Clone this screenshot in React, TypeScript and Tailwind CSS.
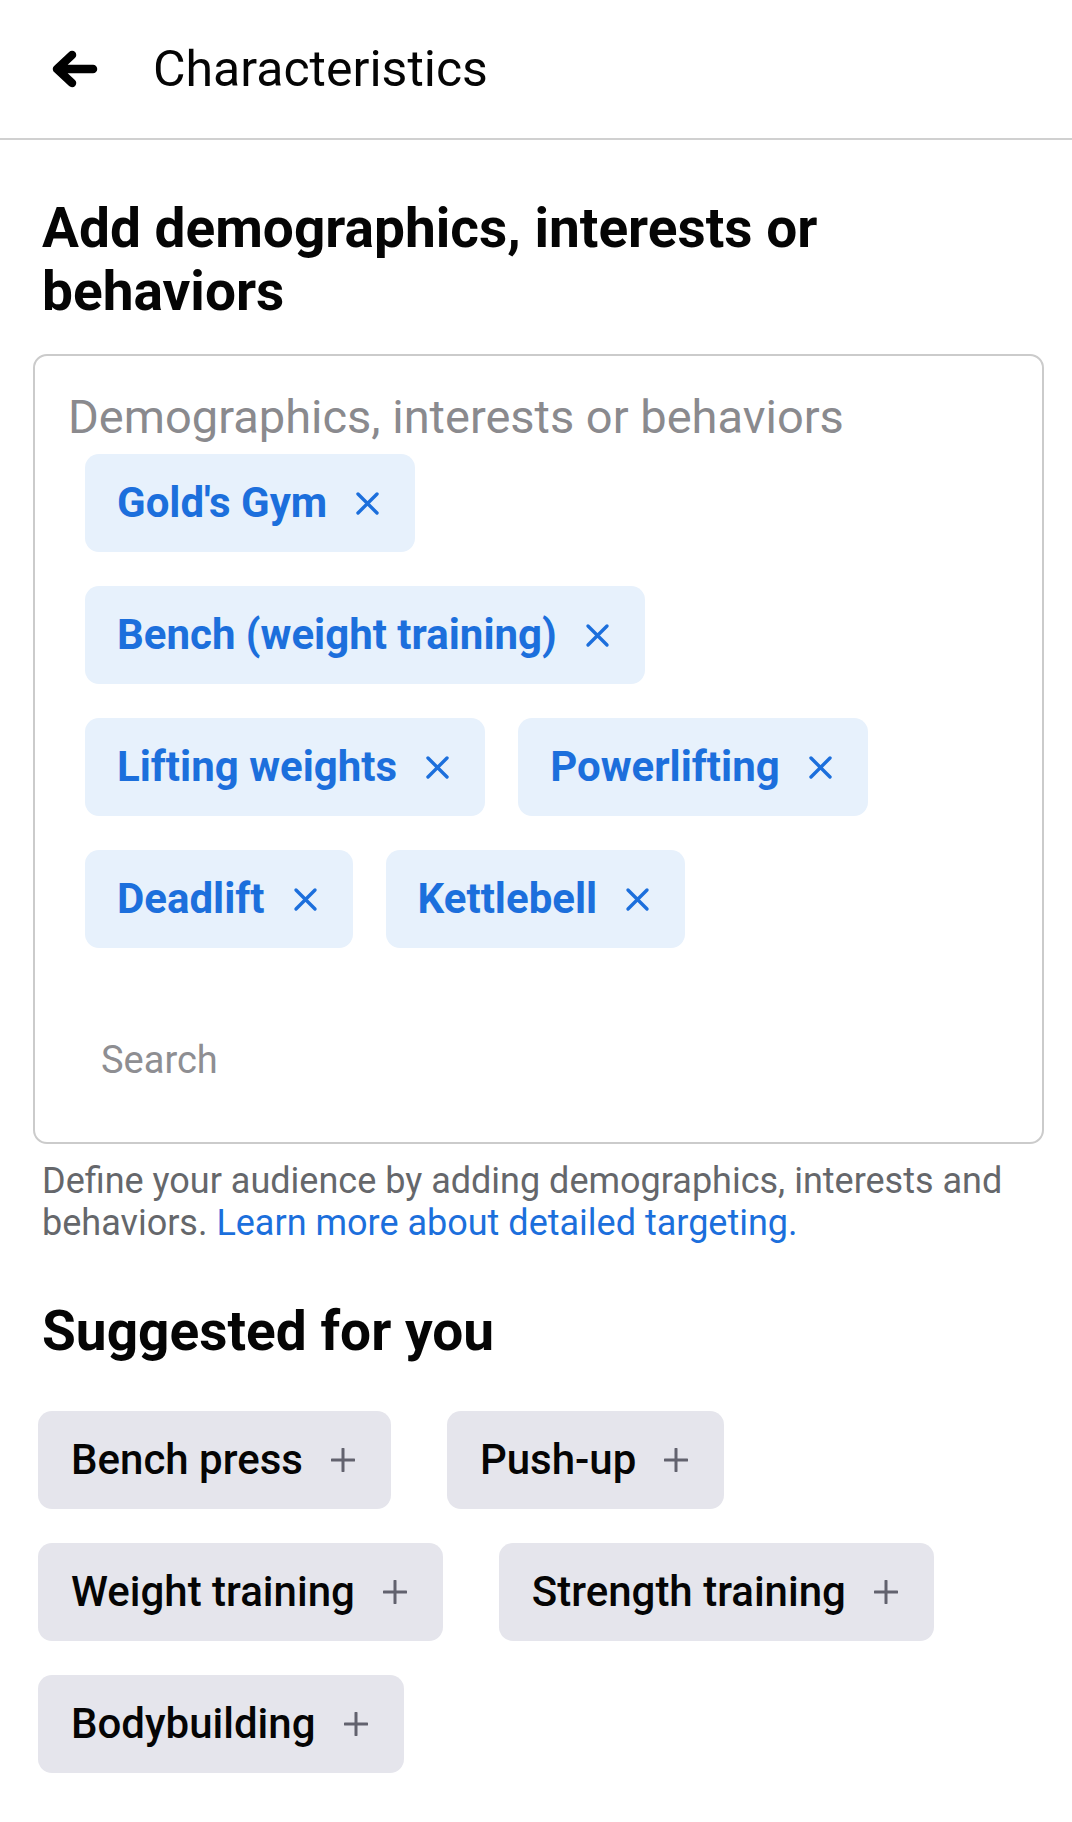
import React from "react";

const font = { fontFamily: "Roboto, 'Noto Sans', Arial, sans-serif" };

function XIcon() {
  return (
    <svg width="25" height="25" viewBox="0 0 25 25" className="shrink-0">
      <path d="M3 3 L22 22 M22 3 L3 22" stroke="#1c6fdc" strokeWidth="3.4" strokeLinecap="round" fill="none" />
    </svg>
  );
}

function PlusIcon() {
  return (
    <svg width="24" height="24" viewBox="0 0 24 24" className="shrink-0">
      <path d="M12 1 V23 M1 12 H23" stroke="#62626e" strokeWidth="3" strokeLinecap="round" fill="none" />
    </svg>
  );
}

function BlueChip({ label }: { label: string }) {
  return (
    <div className="flex h-[98px] items-center rounded-[14px] bg-[#e7f1fc] pl-[32px] pr-[35px]">
      <span className="text-[42px] font-bold leading-none text-[#1c6fdc]">{label}</span>
      <span className="ml-[28px] flex items-center">
        <XIcon />
      </span>
    </div>
  );
}

function GrayChip({ label }: { label: string }) {
  return (
    <div className="flex h-[98px] items-center rounded-[14px] bg-[#e5e5ec] pl-[33px] pr-[36px]">
      <span className="text-[42px] font-medium leading-none text-[#050505]">{label}</span>
      <span className="ml-[28px] flex items-center">
        <PlusIcon />
      </span>
    </div>
  );
}

export default function App() {
  const blueRows = [["Gold's Gym"], ["Bench (weight training)"], ["Lifting weights", "Powerlifting"], ["Deadlift", "Kettlebell"]];
  const grayRows = [["Bench press", "Push-up"], ["Weight training", "Strength training"], ["Bodybuilding"]];
  return (
    <div style={font} className="min-h-[1822px] w-[1072px] bg-white">
      <div className="flex h-[140px] items-center border-b-2 border-[#d0d0d0]">
        <div className="ml-[50px] flex w-[50px] items-center">
          <svg width="48" height="40" viewBox="0 0 48 40">
            <path d="M43 20 H8 M22 6 L7 20 L22 34" stroke="#000" strokeWidth="8.5" strokeLinecap="round" strokeLinejoin="round" fill="none" />
          </svg>
        </div>
        <div className="ml-[53px] text-[50px] leading-none text-[#050505]">Characteristics</div>
      </div>

      <h1 className="mt-[57px] pl-[42px] pr-[40px] text-[55px] font-bold leading-[63px] text-[#050505]">
        Add demographics, interests or behaviors
      </h1>

      <div className="ml-[33px] mr-[28px] mt-[31px] flex h-[790px] flex-col rounded-[14px] border-2 border-[#cbcbcb] pt-[33px]">
        <div className="pl-[33px] text-[47px] leading-[56px] text-[#8a8a8e]">Demographics, interests or behaviors</div>
        <div className="mt-[9px] flex flex-col gap-y-[34px] pl-[50px]">
          {blueRows.map((row, i) => (
            <div key={i} className="flex gap-x-[33px]">
              {row.map((l) => (
                <BlueChip key={l} label={l} />
              ))}
            </div>
          ))}
        </div>
        <div className="mt-[89px] pl-[66px] text-[38px] leading-[46px] text-[#8e8e92]">Search</div>
      </div>

      <p className="mt-[16px] pl-[42px] pr-[28px] text-[36px] leading-[42px] text-[#65676b]">
        Define your audience by adding demographics, interests and behaviors.{" "}
        <span className="text-[#1c6fdc]">Learn more about detailed targeting.</span>
      </p>

      <h2 className="mt-[56px] pl-[42px] text-[55px] font-bold leading-[63px] text-[#050505]">Suggested for you</h2>

      <div className="mt-[48px] flex flex-col gap-y-[34px] pl-[38px]">
        {grayRows.map((row, i) => (
          <div key={i} className="flex gap-x-[56px]">
            {row.map((l) => (
              <GrayChip key={l} label={l} />
            ))}
          </div>
        ))}
      </div>
    </div>
  );
}
